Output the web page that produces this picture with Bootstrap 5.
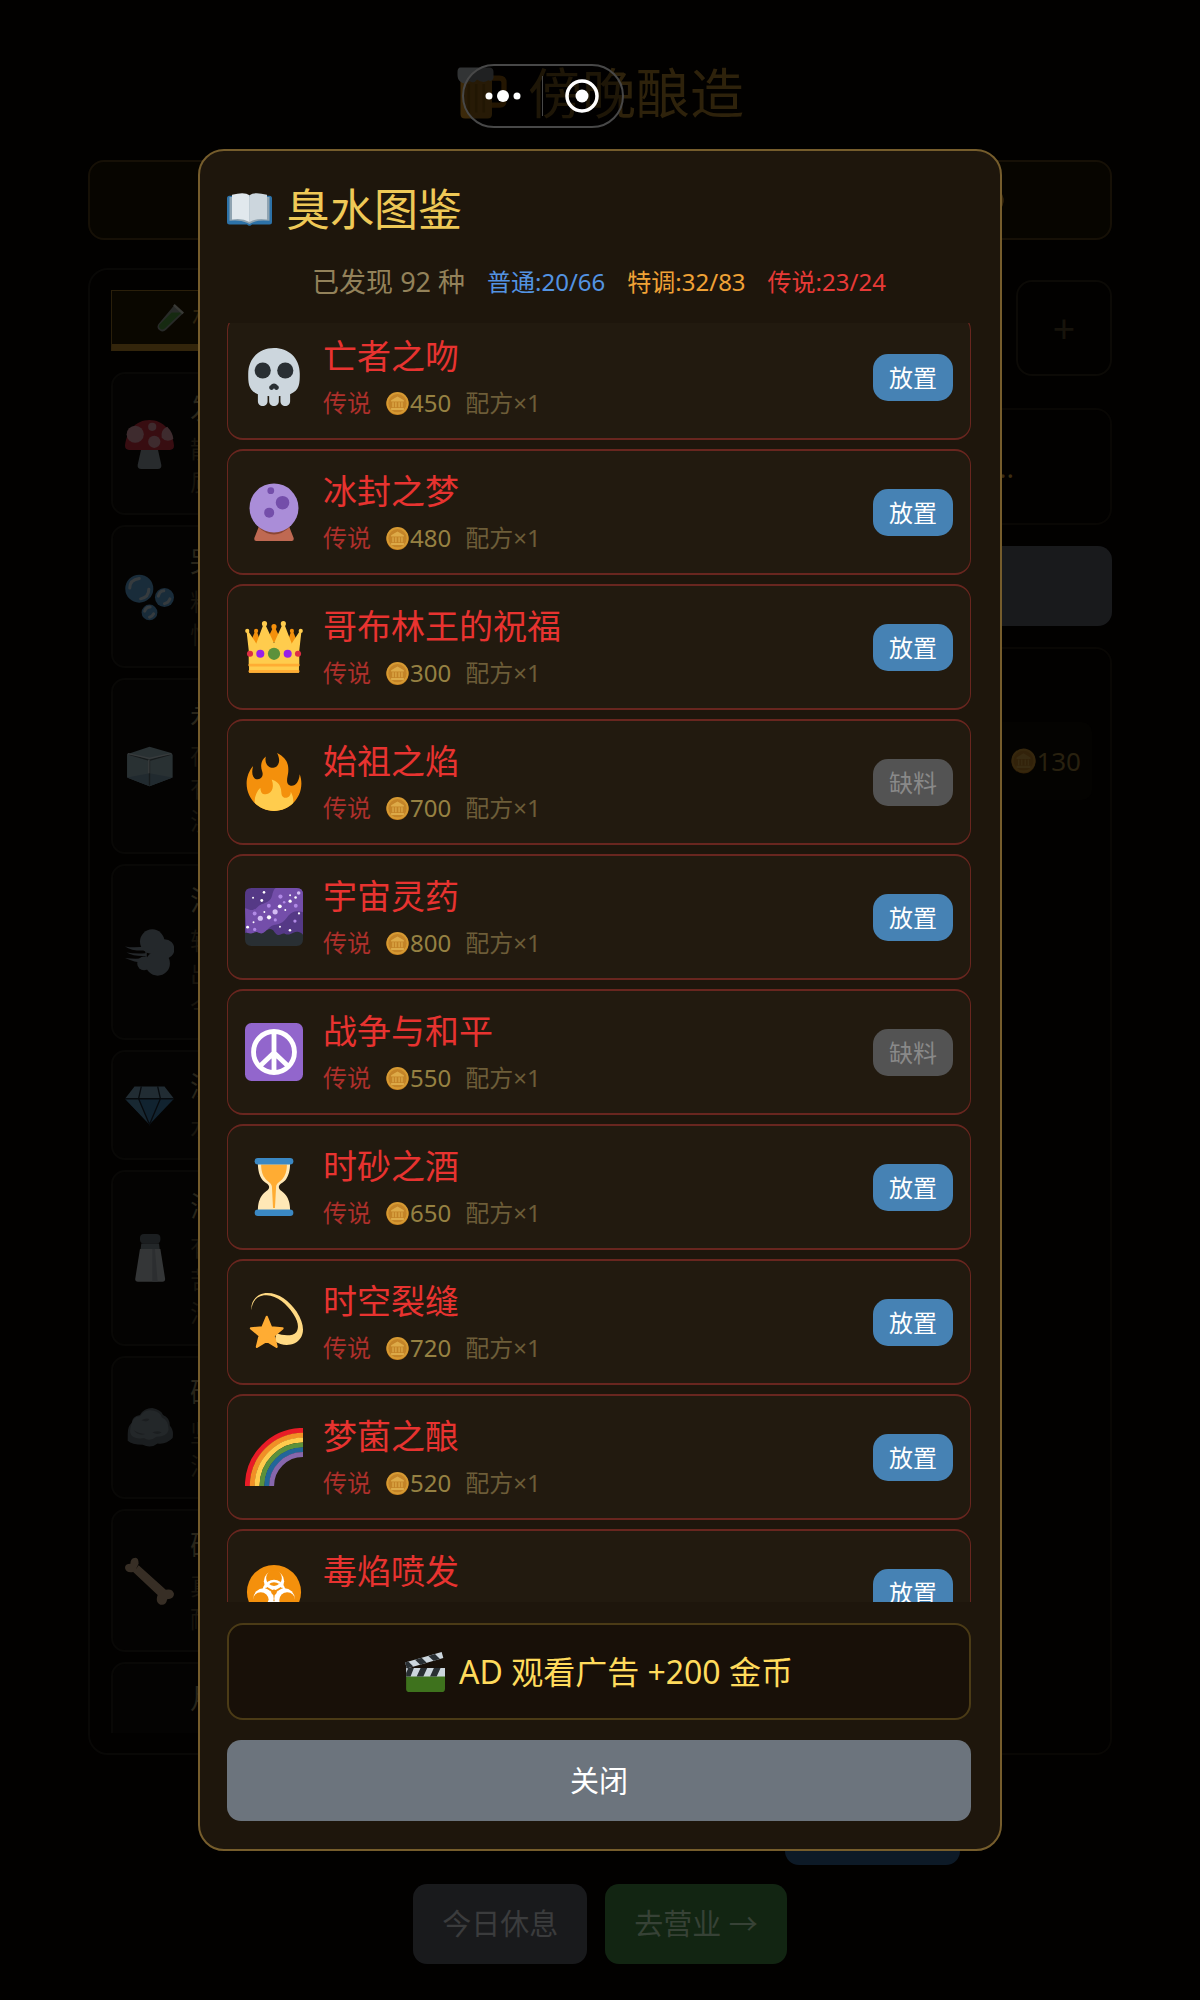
<!DOCTYPE html>
<html lang="zh-CN">
<head>
<meta charset="utf-8">
<meta name="viewport" content="width=device-width, initial-scale=1">
<title>臭水图鉴</title>
<link href="https://cdn.jsdelivr.net/npm/bootstrap@5.3.0/dist/css/bootstrap.min.css" rel="stylesheet">
<style>
body{background:#020100;font-family:"Noto Sans","Noto Sans CJK SC",sans-serif;color:#382b10}
svg{display:block;flex:none}
.stage{height:100vh;min-height:1200px;padding:53px 24px 36px}
.stage-body{max-width:1024px;width:100%;min-height:0}
.stage-title{font-size:54px;line-height:80px;font-weight:400;color:#2e220b;margin:0 0 27px;gap:18px}
.status-bar{height:80px;border:2px solid #161006;border-radius:16px;background:#070500;padding-right:106px;margin-bottom:28px}
.main-cols{min-height:0;gap:20px;flex:1 1 0}
.shelf{border:2px solid #090806;border-radius:20px;padding:20px 21px;flex:1 1 0;min-height:0}
.shelf-tab{height:61px;border:1px solid #2a1f0a;border-bottom:7px solid #33250b;background:#0a0700;border-radius:0;color:#2c210c;font-size:27px;padding:0 0 0 44px;gap:8px;text-align:left}
.shelf-list{margin-top:21px;gap:10px;overflow:hidden;min-height:0}
.mat{border:2px solid #090806;border-radius:14px;background:#040302;padding:16px 12px 15px;gap:16px;flex:none}
.mat-name{font-size:28px;line-height:36px;margin-bottom:6px;color:#29251a;white-space:nowrap}
.mat-note{font-size:24px;line-height:33px;color:#17140d;white-space:nowrap}
.dim{opacity:.24}
.brew{flex:1 1 0;padding-top:12px;min-height:0}
.slot-add{width:96px;height:96px;border:2px solid #0c0a06;border-radius:16px;background:transparent;color:#17130b;font-size:40px;padding:0}
.hint-box{height:117px;border:2px solid #090704;border-radius:16px;margin-top:32px;color:#3c2d10;font-size:28px;padding-right:96px}
.long-btn{height:80px;border:0;border-radius:14px;background:#191a1c;margin:21px 0}
.orders{border:2px solid #090704;border-radius:16px;padding:73px 18px 0}
.order-row{height:78px;background:#040301;border-radius:10px;padding-right:11px;font-size:26px;color:#29210f}
.tool-row{padding:30px 152px 19px 0}
.tool-btn{width:175px;height:80px;border:0;border-radius:14px;background:#0d1a27}
.foot-row{gap:18px}
.foot-btn{height:80px;border:0;border-radius:14px;padding:0 29px;font-size:29px;color:#3b3c3d;background:#191a1c}
.foot-btn.go{background:#122512;color:#374236}
.veil{inset:0;min-height:1200px;padding:149px 16px}
.codex{max-width:804px;width:100%;height:100%;border:2px solid #765d2c;border-radius:26px;background:#1e160c;padding:28px 29px 28px 27px}
.codex-title{font-size:44px;line-height:60px;font-weight:400;color:#efc957;gap:14px;margin:0}
.tally{font-size:24px;line-height:36px;margin:25px 0 23px;gap:22px}
.tally-all{font-size:27px;color:#93825a}
.c-blue{color:#5393e2}.c-gold{color:#f0a236}.c-red{color:#e83a37}
.scroller{overflow:hidden;min-height:0;flex:1 1 0}
.entries{gap:9px;margin-top:-9px}
.entry{height:126px;border:solid #69261f;border-width:2px 1px;border-radius:16px;background:#221a0f;padding:0 17px}
.entry-text{margin-left:20px}
.entry-name{font-size:34px;line-height:52px;color:#e83330}
.entry-meta{font-size:24px;line-height:42px;color:#6d5d38}
.entry-meta .rank{color:#ad302b;margin-right:15px}
.entry-meta .price{color:#968142;margin-right:14px;gap:1px}
.put{width:80px;height:47px;border:0;border-radius:15px;background:#4682b4;color:#fff;font-size:24px;line-height:47px;padding:0}
.put:disabled{background:#535353;color:#898989}
.ad-btn{height:97px;border:2px solid #4b3b16;border-radius:16px;background:#181008;color:#ffdb5c;font-size:32px;margin:21px 0 20px;gap:14px}
.close-btn{height:81px;border:0;border-radius:14px;background:#6c747d;color:#fff;font-size:29px}
.capsule{top:64px;left:50%;margin-left:-138px;width:162px;height:64px;border:2px solid #484848;border-radius:32px;background:rgba(0,0,0,.35)}
.capsule button{border:0;background:none;padding:0;width:80px;height:60px;display:flex;align-items:center;justify-content:center}
.capsule button:first-child{width:78px}
.capsule i{width:1px;height:40px;background:#484848}
</style>
</head>
<body>
<svg width="0" height="0" class="position-absolute" aria-hidden="true">
<symbol id="skull" viewBox="0 0 36 36"><path fill="#CCD6DD" d="M34 16C34 6 26.837 0 18 0S2 6 2 16c0 5.574.002 10.388 6 12.64V33c0 1.657 1.343 3 3 3s3-1.343 3-3v-3.155c.324.027.654.052 1 .07V33c0 1.657 1.343 3 3 3s3-1.343 3-3v-3.085c.346-.019.676-.043 1-.07V33c0 1.657 1.344 3 3 3 1.657 0 3-1.343 3-3v-4.36c5.998-2.252 6-7.066 6-12.64z"/><g fill="#292F33"><circle cx="11" cy="14" r="5"/><circle cx="25" cy="14" r="5"/><path d="M19.903 23.062C19.651 22.449 18.9 22 18 22s-1.652.449-1.903 1.062c-.632.176-1.097.75-1.097 1.438 0 .828.671 1.5 1.5 1.5.655 0 1.206-.422 1.41-1.007h.18c.205.585.756 1.007 1.41 1.007.828 0 1.5-.672 1.5-1.5 0-.688-.466-1.261-1.097-1.438z"/></g></symbol>
<symbol id="orb" viewBox="0 0 36 36"><path fill="#BF6952" d="M9 26h18l3.200 8.200Q30.500 36 29 36H7q-1.500 0-1.200-1.800z"/><path fill="#8A4633" d="M8.300 27.500Q18 36.500 27.700 27.500L27 25H9z"/><circle cx="18" cy="15.500" r="15.200" fill="#AA8DD8"/><g fill="#744EAA"><circle cx="16" cy="4.800" r="2.100"/><circle cx="23.300" cy="12.200" r="4.200"/><circle cx="15" cy="18.400" r="3.100"/></g></symbol>
<symbol id="crown" viewBox="0 0 36 36"><g fill="#F4900C"><path d="M3 16 6.300 8h1L10 16zM13 15 17.300 6h1.400L23 15zM26 16 28.700 8h1L33 16z"/><circle cx="6.900" cy="8" r="1.300"/><circle cx="18" cy="5.400" r="1.600"/><circle cx="29.100" cy="8" r="1.300"/></g><path fill="#FFCC4D" d="M1 8.500 2 8l5 7.800L11.400 4h1.200L18 15.600 23.200 4h1.300L29 15.800 34 8l1 .500L33.700 20v10H2.300V20z"/><g fill="#FFCC4D"><circle cx="1.400" cy="8" r="1.300"/><circle cx="12.100" cy="3.500" r="1.600"/><circle cx="23.800" cy="3.500" r="1.600"/><circle cx="34.600" cy="8" r="1.300"/><path d="M2.500 28h31v6h-31z"/></g><path stroke="#FFAC33" stroke-width="1.700" stroke-linecap="round" d="M3 29.200h30M3 33.100h30"/><circle cx="18" cy="22.200" r="3.800" fill="#5C913B"/><g fill="#9820E8"><circle cx="9.500" cy="22.200" r="2.500"/><circle cx="26.500" cy="22.200" r="2.500"/></g><g fill="#DD2E44"><circle cx="3.100" cy="22.200" r="1.900"/><circle cx="32.900" cy="22.200" r="1.900"/></g></symbol>
<symbol id="fire" viewBox="0 0 36 36"><path fill="#F4900C" d="M35 19c0-2.062-.367-4.039-1.040-5.868-.460 5.389-3.333 8.157-6.335 6.868-2.812-1.208-.917-5.917-.777-8.164.236-3.809-.012-8.169-6.931-11.794 2.875 5.500.333 8.917-2.333 9.125-2.958.231-5.667-2.542-4.667-7.042-3.238 2.386-3.332 6.402-2.333 9 1.042 2.708-.042 4.958-2.583 5.208-2.840.280-4.418-3.041-2.963-8.333C2.520 10.965 1 14.805 1 19c0 9.389 7.611 17 17 17s17-7.611 17-17z"/><path fill="#FFCC4D" d="M28.394 23.999c.148 3.084-2.561 4.293-4.019 3.709-2.106-.843-1.541-2.291-2.083-5.291s-2.625-5.083-5.708-6c2.250 6.333-1.247 8.667-3.080 9.084-1.872.426-3.753-.001-3.968-4.007C7.352 23.668 6 26.676 6 30c0 .368.023.730.055 1.090C9.125 34.124 13.342 36 18 36s8.875-1.876 11.945-4.910c.032-.360.055-.722.055-1.090 0-2.187-.584-4.236-1.606-6.001z"/></symbol>
<symbol id="galaxy" viewBox="0 0 36 36"><path fill="#553986" d="M4 0h28q4 0 4 4v28H0V4q0-4 4-4z"/><path fill="#744EAA" d="M0 12.500c3 .500 4 2.500 7 0 3-3 3-2 7-4 4-2 2-6 5-8.500h13q4 0 4 4v11c-4-1-6-1-9 2-3 4-4 5-9 6-4 1-4 5-9 6-4 1-5 1-8 0z"/><path fill="#292F33" d="M0 28c2-1 3 1 5 0s2-1 4 0c3 1 4-2.500 6.500-2.500S18 28 20 29s3-1.500 5-.500 3 0 5-.800 4-1 6 1.300v3q0 4-4 4H4q-4 0-4-4z"/><g fill="#B18AE6"><circle cx="22" cy="5.300" r="1.300"/><circle cx="31.500" cy="11" r="1.200"/><circle cx="14.800" cy="11" r="1.200"/><circle cx="6" cy="15.800" r="1.200"/><circle cx="31" cy="20.500" r="1"/><circle cx="18.800" cy="19.800" r="1"/><circle cx="6" cy="25.700" r="1"/><circle cx="24.300" cy="8.800" r=".8"/></g><g fill="#D4BDF4"><circle cx="18.700" cy="14.800" r="1.600"/><circle cx="9.500" cy="18.800" r="1.600"/><circle cx="33.300" cy="3.100" r="1.100"/></g><g fill="#fff"><circle cx="21.600" cy="11.400" r="1.200"/><circle cx="14.900" cy="18.200" r="1.300"/><circle cx="28" cy="8.200" r="1"/><circle cx="31.400" cy="5.900" r=".8"/><circle cx="10.400" cy="7.800" r=".9"/><circle cx="11.800" cy="2.700" r=".8"/><circle cx="5" cy="6" r=".6"/><circle cx="28" cy="4.500" r=".6"/><circle cx="25" cy="13.700" r=".6"/><circle cx="33.500" cy="15.800" r=".7"/><circle cx="12" cy="14.900" r=".6"/><circle cx="5.300" cy="21.300" r=".6"/><circle cx="1.600" cy="24.300" r=".9"/><circle cx="21.700" cy="24" r=".6"/><circle cx="27.900" cy="26.200" r=".8"/></g></symbol>
<symbol id="peace" viewBox="0 0 36 36"><rect width="36" height="36" rx="4" fill="#9266CC"/><g fill="none" stroke="#fff" stroke-width="3"><circle cx="18" cy="18" r="12.700"/><path d="M18 5v26M18 18.500 9 27M18 18.500 27 27"/></g></symbol>
<symbol id="glass" viewBox="0 0 36 36"><path fill="#FFE8B6" d="M8 3h20c0 5-1 8-2.500 10.200C24 15.500 21 16 21 18s3 3 4.500 5.300C27 25.500 28 28 28 33H8c0-5 1-7.500 2.500-9.700C12 21 15 20 15 18s-3-2.500-4.500-4.800C9 11 8 8 8 3z"/><path fill="#FFAC33" d="M10 4h16c0 4-1 6.500-2 8-1.500 2.500-4.500 3.500-4.700 5.700L18.600 31h-1.200l-.7-13.300C16.500 15.500 13.500 14.500 12 12c-1-1.500-2-4-2-8z"/><g fill="#3B88C3"><rect x="6" width="24" height="4" rx="2"/><rect x="6" y="32" width="24" height="4" rx="2"/></g></symbol>
<symbol id="dizzy" viewBox="0 0 36 36"><path fill="#FFD983" d="M3.900 10.500C3.500 5 7.500 0 14 0c7 0 13.500 5 18 11.500C36.500 18.500 37 24 34.500 28c-3 5-11 5.500-16 2l1-5c4 1.500 10 2 12.300-.700 1.800-2.300 1.400-6.500-1.800-11.300C26 7 20 1.600 13.500 1.400 7 1.200 4.500 5.500 3.900 10.500z"/><path fill="#FFAC33" stroke="#FFAC33" stroke-width="1.400" stroke-linejoin="round" d="M13.500 14.800l2.700 6.600 7.100.500-5.400 4.500 1.700 7-6.100-3.800-6.100 3.800 1.700-7-5.400-4.500 7.100-.500z"/></symbol>
<symbol id="rainbow" viewBox="0 0 36 36"><g fill="none" stroke-width="3.100"><path stroke="#E81C27" d="M1.500 36A34.500 34.500 0 0 1 36 1.500"/><path stroke="#F18F26" d="M4.500 36A31.500 31.500 0 0 1 36 4.500"/><path stroke="#FFCC4D" d="M7.500 36A28.500 28.500 0 0 1 36 7.500"/><path stroke="#5C913B" d="M10.500 36A25.500 25.500 0 0 1 36 10.500"/><path stroke="#226699" d="M13.500 36A22.500 22.500 0 0 1 36 13.500"/><path stroke="#8767AC" d="M16.500 36A19.500 19.500 0 0 1 36 16.500"/></g></symbol>
<symbol id="bio" viewBox="0 0 36 36"><circle cx="18" cy="18" r="16.800" fill="#F4900C"/><g fill="#fff"><circle cx="18" cy="11.300" r="6.300"/><circle cx="11.500" cy="22" r="6.300"/><circle cx="24.500" cy="22" r="6.300"/></g><g fill="#F4900C"><circle cx="18" cy="9.300" r="4.900"/><circle cx="9.800" cy="23" r="4.900"/><circle cx="26.200" cy="23" r="4.900"/><circle cx="18" cy="18" r="1.600"/></g><circle cx="18" cy="18" r="6.500" fill="none" stroke="#fff" stroke-width="1.500" stroke-dasharray="6.800 6.814" stroke-dashoffset="-7"/><path d="M14.300 12.400q3.700-2.500 7.400 0" fill="none" stroke="#fff" stroke-width="1.500"/><path stroke="#F4900C" stroke-width="1.100" d="M18 18l-4.500-2.700M18 18l4.500-2.700"/></symbol>
<symbol id="coin" viewBox="0 0 36 36"><circle cx="18" cy="18.600" r="17.300" fill="#C8801F"/><circle cx="18" cy="17.400" r="17.300" fill="#D69A33"/><circle cx="18" cy="17.500" r="14.300" fill="#C48428"/><path d="M18 7 8 13v2h20v-2zM10 16h2v8h-2zm4.500 0h2v8h-2zm5 0h2v8h-2zm4.500 0h2v8h-2zM8 25h20v3H8z" fill="#DDAA48"/></symbol>
<symbol id="book" viewBox="0 0 36 26"><path fill="#2D72A8" d="M2 2h32q2 0 2 2v19q0 2-2 2H20q-2 2-4 0H2q-2 0-2-2V4q0-2 2-2z"/><path fill="#8FA3B1" d="M2 3h32v19q-9-1-14 1.500l-2 1-2-1Q10 21 2 22z"/><path fill="#E1E8ED" d="M4 1.200Q14-1.500 18 1.500V23Q12 19.500 4 21z"/><path fill="#CCD6DD" d="M32 1.200Q22-1.500 18 1.500V23Q24 19.500 32 21z"/></symbol>
<symbol id="clap" viewBox="0 0 36 36"><path fill="#3E721D" d="M1 21h35v12q0 3-3 3H4q-3 0-3-3z"/><path fill="#CCD6DD" d="M1 14.500h35V22H1zM0 9.500 33 0l1.500 5.500L1.800 14.800z"/><path fill="#292F33" d="M3 14.500h5L5 22H1v-3zM14 14.500h6L16.500 22h-6zM26 14.500h6L28.500 22h-6zM0 9.500l3-.900L7.500 13l-5.700 1.800zM9 7l6-1.800L19.500 9.700l-5.800 1.700zM21 3.500 27 1.700 31.500 6.200 25.600 7.900z"/></symbol>
<symbol id="beer" viewBox="0 0 36 36"><path fill="none" stroke="#E58A12" stroke-width="3.500" d="M24 8h5q3 0 3 3v12q0 3-3 3h-5"/><path fill="#F4A82A" d="M3 6h21v26q0 3-3 3H6q-3 0-3-3z"/><path stroke="#D48A18" stroke-width="1.800" d="M8.500 12v19M13.500 12v19M18.500 12v19"/><path fill="#CCD6DD" d="M3 1h19q3 0 3 3v4q-1 3-3.500 1.500Q18 12 14 9q-2 3-5 1-3 3-6 .500Q1 9 1 6V4q0-3 2-3z"/></symbol>
<symbol id="tube" viewBox="0 0 36 36"><path d="M24 1 35 12 13 33q-4 4-8 1-5-3-2-8z" fill="#8899A6"/><path d="M20 11h13L12 31q-3 3-6 1-4-3-1-6z" fill="#3E9B4A"/><path d="M23 1 35 12" stroke="#CCD6DD" stroke-width="3"/></symbol>
<symbol id="shroom" viewBox="0 0 36 36"><path fill="#99AAB5" d="M12 21h12l2.700 12q.3 3-2.700 3H12q-3 0-2.700-3z"/><path fill="#DD2E44" d="M0 19C1 8 8 0 18 0s17 8 18 19q0 3-3 3H3q-3 0-3-3z"/><g fill="#F4ABBA"><circle cx="7.500" cy="10.500" r="6.300"/><circle cx="20" cy="5" r="3"/><circle cx="21.500" cy="16" r="4.500"/><path d="M27 13q-1-6 4-8 4 4 4.500 9-5 3-8.500-1z"/></g></symbol>
<symbol id="bubbles" viewBox="0 0 36 36"><g fill="#5DADEC"><circle cx="10.500" cy="11.500" r="10.300"/><circle cx="29" cy="18" r="7"/><circle cx="18" cy="29" r="5.800"/></g><g stroke="#D6ECFA" stroke-width="2.200" fill="none" stroke-linecap="round"><path d="M3.500 11q0-6 7-7M17.500 12q0 6-6 7M24.500 17q1-4 4-4M33 19q-1 3-4 3.500M14.500 28q1-3 4-3M21 30q-1 2-3 2.500"/></g></symbol>
<symbol id="ice" viewBox="0 0 36 36"><path fill="#9FC1D0" d="M18 3.500 34 8q1 1 1 2v16L18 32.500 1.500 26V9z"/><path fill="#7EA6BC" d="M18 23 1.500 26 18 32.500 35 26z"/><path fill="none" stroke="#566970" stroke-width="1" d="M3 9l15 4.500L33.500 9M18 13v19"/><path fill="none" stroke="#DDEEF5" d="M2 8.500l16 3.500 16-3.500M17.500 13v10"/></symbol>
<symbol id="dash" viewBox="0 0 36 36"><g fill="#8C9DAC"><circle cx="20" cy="10" r="9"/><circle cx="29" cy="15.500" r="7.300"/><circle cx="24" cy="26" r="9"/><circle cx="14" cy="26" r="5"/><path d="M0 13.500q8 1.500 16-.5v13Q6 25 0 22q8 1 15 0v-1.500Q7 21 1 18q7 1 14 .5v-2Q5 17 0 13.500z"/></g></symbol>
<symbol id="gem" viewBox="0 0 36 36"><path fill="#7FB0D0" d="M7 4h22l7 9H0z"/><path fill="#3B88C3" d="M0 13h36L18 32z"/><path fill="#5A9DCC" d="M0 13h10l8 19z"/><path fill="none" stroke="#123" d="M0 13h36M12 4l-2 9 8 19 8-19-2-9"/></symbol>
<symbol id="salt" viewBox="0 0 36 36"><rect x="11" width="15" height="7" rx="3" fill="#66757F"/><path d="M12 7h13l.5 4h-14z" fill="#8899A6"/><path fill="#CCD6DD" d="M11 11h15l3.500 22q0 2-2 2h-18q-2 0-2-2z"/><path fill="#AAB8C2" d="M20 11h2l2 24h-4z"/></symbol>
<symbol id="rock" viewBox="0 0 36 36"><path fill="#66757F" d="M2 22q0-6 3-8 0-5 6-6 3-5 9-5 6 1 8 5 5 2 5 8 3 3 2 9-5 5-11 4-5 4-11 1-8 0-11-3z"/><path fill="#8899A6" d="M4 18q1-9 7-9 4-6 10-4 5 1 6 5 5 2 5 9-1 5-9 5-5 4-9 1-5 1-8-1-3-2-2-6z"/><path fill="#66757F" d="M12 12q3-2 6-1-1 3-6 1zM20 21q4-2 7 0-3 2-7 0zM6 19q4 3 9 3-5 2-9-3z"/></symbol>
<symbol id="bone" viewBox="0 0 36 36"><path fill="#D9B793" d="M8 9 10 5Q10-1 6 1 4 2 4 5 0 5 0 8q1 4 6 3l18 17q-2 5 2 7 4 1 5-4 5 0 5-4-1-4-6-3L10 6z"/></symbol>
</svg>

<div class="stage d-flex flex-column align-items-center">
<div class="stage-body flex-grow-1 d-flex flex-column">
<h1 class="stage-title d-flex justify-content-center align-items-center flex-shrink-0"><svg class="dim" width="54" height="60"><use href="#beer"/></svg>傍晚酿造</h1>
<div class="status-bar d-flex align-items-center justify-content-end flex-shrink-0"><svg class="dim" width="25" height="25"><use href="#coin"/></svg></div>
<div class="main-cols d-flex">
<section class="shelf d-flex flex-column">
<button class="shelf-tab d-flex align-items-center flex-shrink-0"><svg class="dim" width="28" height="32"><use href="#tube"/></svg>材料</button>
<div class="shelf-list d-flex flex-column">
<div class="mat d-flex align-items-center"><svg class="dim" width="49" height="49"><use href="#shroom"/></svg><div><div class="mat-name">发光</div><div class="mat-note">散发</div><div class="mat-note">质感</div></div></div>
<div class="mat d-flex align-items-center"><svg class="dim" width="49" height="49"><use href="#bubbles"/></svg><div><div class="mat-name">哭泣</div><div class="mat-note">粘稠</div><div class="mat-note">悄悄</div></div></div>
<div class="mat d-flex align-items-center"><svg class="dim" width="49" height="49"><use href="#ice"/></svg><div><div class="mat-name">永冻</div><div class="mat-note">存着</div><div class="mat-note">有些</div><div class="mat-note">漫长</div></div></div>
<div class="mat d-flex align-items-center"><svg class="dim" width="49" height="49"><use href="#dash"/></svg><div><div class="mat-name">浮云</div><div class="mat-note">轻盈</div><div class="mat-note">出没</div><div class="mat-note">今日</div></div></div>
<div class="mat d-flex align-items-center"><svg class="dim" width="49" height="49"><use href="#gem"/></svg><div><div class="mat-name">深蓝</div><div class="mat-note">水晶</div></div></div>
<div class="mat d-flex align-items-center"><svg class="dim" width="49" height="49"><use href="#salt"/></svg><div><div class="mat-name">海盐</div><div class="mat-note">有点</div><div class="mat-note">苦咸</div><div class="mat-note">治愈</div></div></div>
<div class="mat d-flex align-items-center"><svg class="dim" width="49" height="49"><use href="#rock"/></svg><div><div class="mat-name">碎石</div><div class="mat-note">坚硬</div><div class="mat-note">混合</div></div></div>
<div class="mat d-flex align-items-center"><svg class="dim" width="49" height="49"><use href="#bone"/></svg><div><div class="mat-name">硬骨</div><div class="mat-note">真的</div><div class="mat-note">耐煮</div></div></div>
<div class="mat d-flex align-items-start"><svg width="49" height="49"></svg><div><div class="mat-name">月光</div></div></div>
</div>
</section>
<section class="brew d-flex flex-column">
<div class="d-flex justify-content-end"><button class="slot-add" aria-label="添加">+</button></div>
<div class="hint-box d-flex align-items-center justify-content-end">...</div>
<button class="long-btn" aria-label="酿造"></button>
<div class="orders flex-grow-1"><div class="order-row d-flex align-items-center justify-content-end"><svg class="dim" width="25" height="26"><use href="#coin"/></svg>130</div></div>
</section>
</div>
<div class="tool-row d-flex justify-content-end"><button class="tool-btn" aria-label="工具"></button></div>
<div class="foot-row d-flex justify-content-center"><button class="foot-btn">今日休息</button><button class="foot-btn go">去营业 →</button></div>
</div>
</div>

<div class="veil position-absolute d-flex justify-content-center">
<main class="codex d-flex flex-column" role="dialog" aria-labelledby="codex-title">
<h2 class="codex-title d-flex align-items-center" id="codex-title"><svg width="45" height="33"><use href="#book"/></svg>臭水图鉴</h2>
<div class="tally d-flex justify-content-center align-items-center"><span class="tally-all">已发现 92 种</span><span class="c-blue">普通:20/66</span><span class="c-gold">特调:32/83</span><span class="c-red">传说:23/24</span></div>
<div class="scroller"><div class="entries d-flex flex-column">
<div class="entry d-flex align-items-center flex-shrink-0"><svg width="58" height="58"><use href="#skull"/></svg><div class="entry-text flex-grow-1"><div class="entry-name">亡者之吻</div><div class="entry-meta d-flex"><span class="rank">传说</span><span class="price d-flex align-items-center"><svg width="23" height="25"><use href="#coin"/></svg>450</span><span>配方×1</span></div></div><button class="put">放置</button></div>
<div class="entry d-flex align-items-center flex-shrink-0"><svg width="58" height="58"><use href="#orb"/></svg><div class="entry-text flex-grow-1"><div class="entry-name">冰封之梦</div><div class="entry-meta d-flex"><span class="rank">传说</span><span class="price d-flex align-items-center"><svg width="23" height="25"><use href="#coin"/></svg>480</span><span>配方×1</span></div></div><button class="put">放置</button></div>
<div class="entry d-flex align-items-center flex-shrink-0"><svg width="58" height="58"><use href="#crown"/></svg><div class="entry-text flex-grow-1"><div class="entry-name">哥布林王的祝福</div><div class="entry-meta d-flex"><span class="rank">传说</span><span class="price d-flex align-items-center"><svg width="23" height="25"><use href="#coin"/></svg>300</span><span>配方×1</span></div></div><button class="put">放置</button></div>
<div class="entry d-flex align-items-center flex-shrink-0"><svg width="58" height="58"><use href="#fire"/></svg><div class="entry-text flex-grow-1"><div class="entry-name">始祖之焰</div><div class="entry-meta d-flex"><span class="rank">传说</span><span class="price d-flex align-items-center"><svg width="23" height="25"><use href="#coin"/></svg>700</span><span>配方×1</span></div></div><button class="put" disabled>缺料</button></div>
<div class="entry d-flex align-items-center flex-shrink-0"><svg width="58" height="58"><use href="#galaxy"/></svg><div class="entry-text flex-grow-1"><div class="entry-name">宇宙灵药</div><div class="entry-meta d-flex"><span class="rank">传说</span><span class="price d-flex align-items-center"><svg width="23" height="25"><use href="#coin"/></svg>800</span><span>配方×1</span></div></div><button class="put">放置</button></div>
<div class="entry d-flex align-items-center flex-shrink-0"><svg width="58" height="58"><use href="#peace"/></svg><div class="entry-text flex-grow-1"><div class="entry-name">战争与和平</div><div class="entry-meta d-flex"><span class="rank">传说</span><span class="price d-flex align-items-center"><svg width="23" height="25"><use href="#coin"/></svg>550</span><span>配方×1</span></div></div><button class="put" disabled>缺料</button></div>
<div class="entry d-flex align-items-center flex-shrink-0"><svg width="58" height="58"><use href="#glass"/></svg><div class="entry-text flex-grow-1"><div class="entry-name">时砂之酒</div><div class="entry-meta d-flex"><span class="rank">传说</span><span class="price d-flex align-items-center"><svg width="23" height="25"><use href="#coin"/></svg>650</span><span>配方×1</span></div></div><button class="put">放置</button></div>
<div class="entry d-flex align-items-center flex-shrink-0"><svg width="58" height="58"><use href="#dizzy"/></svg><div class="entry-text flex-grow-1"><div class="entry-name">时空裂缝</div><div class="entry-meta d-flex"><span class="rank">传说</span><span class="price d-flex align-items-center"><svg width="23" height="25"><use href="#coin"/></svg>720</span><span>配方×1</span></div></div><button class="put">放置</button></div>
<div class="entry d-flex align-items-center flex-shrink-0"><svg width="58" height="58"><use href="#rainbow"/></svg><div class="entry-text flex-grow-1"><div class="entry-name">梦菌之酿</div><div class="entry-meta d-flex"><span class="rank">传说</span><span class="price d-flex align-items-center"><svg width="23" height="25"><use href="#coin"/></svg>520</span><span>配方×1</span></div></div><button class="put">放置</button></div>
<div class="entry d-flex align-items-center flex-shrink-0"><svg width="58" height="58"><use href="#bio"/></svg><div class="entry-text flex-grow-1"><div class="entry-name">毒焰喷发</div><div class="entry-meta d-flex"><span class="rank">传说</span></div></div><button class="put">放置</button></div>
</div></div>
<button class="ad-btn d-flex align-items-center justify-content-center flex-shrink-0"><svg width="40" height="40"><use href="#clap"/></svg>AD 观看广告 +200 金币</button>
<button class="close-btn flex-shrink-0">关闭</button>
</main>
</div>
<div class="capsule position-absolute d-flex align-items-center"><button aria-label="更多"><svg width="36" height="14" fill="#fff"><circle cx="4" cy="7" r="3.500"/><circle cx="18" cy="7" r="6"/><circle cx="32" cy="7" r="3.500"/></svg></button><i></i><button aria-label="关闭小程序"><svg width="36" height="36"><circle cx="18" cy="18" r="15" fill="none" stroke="#fff" stroke-width="3.500"/><circle cx="18" cy="18" r="6.500" fill="#fff"/></svg></button></div>
<script src="https://cdn.jsdelivr.net/npm/bootstrap@5.3.0/dist/js/bootstrap.bundle.min.js"></script>
</body>
</html>
